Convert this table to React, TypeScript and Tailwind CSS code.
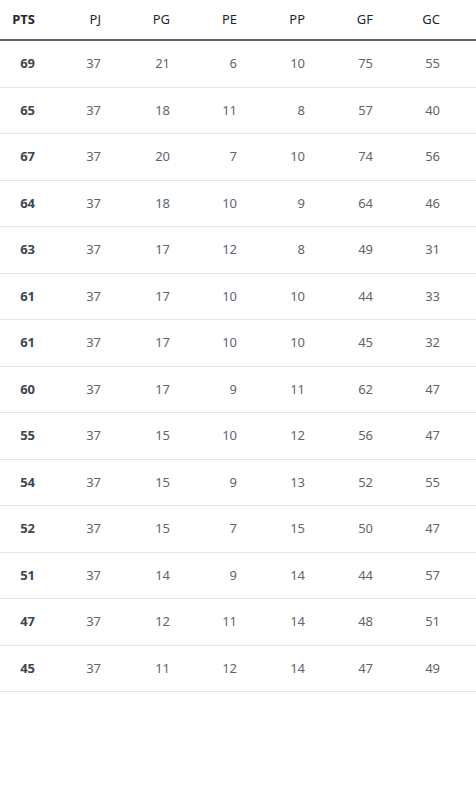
// Tabla de posiciones: columnas de estadísticas
import React from 'react';

const rows: number[][] = [
  [69, 37, 21, 6, 10, 75, 55],
  [65, 37, 18, 11, 8, 57, 40],
  [67, 37, 20, 7, 10, 74, 56],
  [64, 37, 18, 10, 9, 64, 46],
  [63, 37, 17, 12, 8, 49, 31],
  [61, 37, 17, 10, 10, 44, 33],
  [61, 37, 17, 10, 10, 45, 32],
  [60, 37, 17, 9, 11, 62, 47],
  [55, 37, 15, 10, 12, 56, 47],
  [54, 37, 15, 9, 13, 52, 55],
  [52, 37, 15, 7, 15, 50, 47],
  [51, 37, 14, 9, 14, 44, 57],
  [47, 37, 12, 11, 14, 48, 51],
  [45, 37, 11, 12, 14, 47, 49],
];

const headers = ['PTS', 'PJ', 'PG', 'PE', 'PP', 'GF', 'GC'];

const grid = 'grid grid-cols-[51px_66px_69px_67px_68px_68px_67px]';

const App: React.FC = () => {
  return (
    <div
      className="w-[476px] min-h-[795px] bg-white"
      style={{ fontFamily: '"Noto Sans", "Open Sans", sans-serif' }}
    >
      <div className={`${grid} h-[41px] items-center border-b-2 border-[#5b636e] text-[13px] text-[#1f2630]`}>
        {headers.map((h, i) => (
          <div key={h} className={`pr-4 text-right ${i === 0 ? 'font-bold' : ''}`}>
            {h}
          </div>
        ))}
      </div>
      {rows.map((r, idx) => (
        <div
          key={idx}
          className={`${grid} h-[46.5px] items-center border-b border-[#e3e6ea] text-[13px] text-[#5d6673]`}
        >
          {r.map((v, i) => (
            <div key={i} className={`pr-4 text-right ${i === 0 ? 'font-bold text-[#3d4653]' : ''}`}>
              {v}
            </div>
          ))}
        </div>
      ))}
    </div>
  );
};

export default App;
